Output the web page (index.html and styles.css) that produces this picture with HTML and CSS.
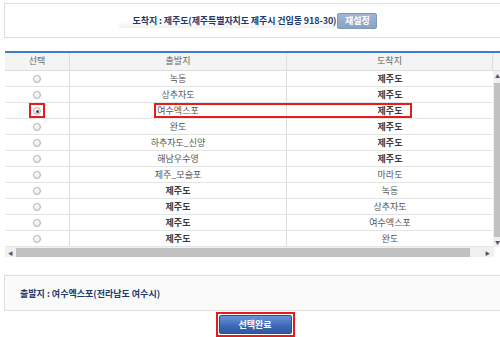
FILE: index.html
```html
<!doctype html>
<html>
  <head>
    <meta charset="utf-8">
    <title>출발지 선택</title>
    <link rel="stylesheet" href="styles.css">
  </head>
  <body>
    <div class="page">
      <div class="dest_box">
        <span class="dest_line">도착지 : 제주도(제주특별자치도 제주시 건입동 918-30)</span>
        <button class="reset_btn">재설정</button>
      </div>

      <div class="grid">
        <div class="grid_head">
          <div class="cell col_pick">선택</div>
          <div class="cell col_from">출발지</div>
          <div class="cell col_to">도착지</div>
        </div>
        <div class="grid_body">
          <div class="rows">
            <div class="row"><div class="cell col_pick"><span class="radio"></span></div><div class="cell col_from">녹동</div><div class="cell col_to bold">제주도</div></div>
            <div class="row"><div class="cell col_pick"><span class="radio"></span></div><div class="cell col_from">상추자도</div><div class="cell col_to bold">제주도</div></div>
            <div class="row picked">
              <div class="cell col_pick"><span class="mark"><span class="radio on"></span></span></div>
              <div class="cell col_from">여수엑스포</div>
              <div class="cell col_to bold">제주도</div>
              <div class="mark_wide"></div>
            </div>
            <div class="row"><div class="cell col_pick"><span class="radio"></span></div><div class="cell col_from">완도</div><div class="cell col_to bold">제주도</div></div>
            <div class="row"><div class="cell col_pick"><span class="radio"></span></div><div class="cell col_from">하추자도_신양</div><div class="cell col_to bold">제주도</div></div>
            <div class="row"><div class="cell col_pick"><span class="radio"></span></div><div class="cell col_from">해남우수영</div><div class="cell col_to bold">제주도</div></div>
            <div class="row"><div class="cell col_pick"><span class="radio"></span></div><div class="cell col_from">제주_모슬포</div><div class="cell col_to">마라도</div></div>
            <div class="row"><div class="cell col_pick"><span class="radio"></span></div><div class="cell col_from bold">제주도</div><div class="cell col_to">녹동</div></div>
            <div class="row"><div class="cell col_pick"><span class="radio"></span></div><div class="cell col_from bold">제주도</div><div class="cell col_to">상추자도</div></div>
            <div class="row"><div class="cell col_pick"><span class="radio"></span></div><div class="cell col_from bold">제주도</div><div class="cell col_to">여수엑스포</div></div>
            <div class="row"><div class="cell col_pick"><span class="radio"></span></div><div class="cell col_from bold">제주도</div><div class="cell col_to">완도</div></div>
          </div>
          <div class="vscroll">
            <span class="arrow">&#9650;</span>
            <span class="vthumb"></span>
            <span class="arrow">&#9660;</span>
          </div>
        </div>
        <div class="hscroll">
          <span class="arrow">&#9664;</span>
          <span class="hthumb"></span>
          <span class="arrow">&#9654;</span>
          <span class="corner"></span>
        </div>
      </div>

      <div class="from_box">출발지 : 여수엑스포(전라남도 여수시)</div>

      <div class="done_wrap">
        <span class="done_mark"><button class="done_btn">선택완료</button></span>
      </div>
    </div>
  </body>
</html>
```

FILE: styles.css
```css
html, body {
  margin: 0;
  padding: 0;
  overflow: hidden;
  background: #fff;
}

.page {
  width: 520px;
  padding: 3px 0 0 4px;
  font-family: "Noto Sans CJK KR", "DejaVu Sans", sans-serif;
  font-size: 9px;
  color: #555;
}

button {
  font-family: inherit;
  cursor: pointer;
}

/* top box with the arrival point */
.dest_box {
  height: 33px;
  border: 1px solid #ddd;
  display: flex;
  align-items: center;
  justify-content: center;
  padding-right: 32px;
}

.dest_line {
  font-weight: bold;
  color: #23396a;
  letter-spacing: -0.1px;
  padding: 1px 1px 1px 14px;
  background: linear-gradient(#fff 55%, #f1f1f1);
}

.reset_btn {
  width: 40px;
  height: 16px;
  padding: 0;
  border: 1px solid #7e98bb;
  border-radius: 2px;
  background: linear-gradient(#a1b6d2, #8aa2c3);
  color: #fff;
  font-size: 9px;
  font-weight: bold;
}

/* the list */
.grid {
  margin: 13px 0 0 1px;
  width: 515px;
  border-top: 2px solid #3d7cc9;
}

.grid_head {
  display: flex;
  height: 17px;
  background: #f4f4f4;
  border-bottom: 1px solid #ddd;
  color: #666;
}

.grid_head .cell {
  line-height: 16px;
}

.cell {
  text-align: center;
  box-sizing: border-box;
}

.col_pick {
  width: 65px;
  border-right: 1px solid #ddd;
}

.col_from {
  width: 217px;
  border-right: 1px solid #ddd;
}

.col_to {
  width: 206px;
}

.grid_head .col_to {
  border-right: 1px solid #ddd;
}

.bold {
  font-weight: bold;
  color: #3a3a3a;
}

.grid_body {
  display: flex;
}

.rows {
  width: 488px;
}

.row {
  display: flex;
  height: 16px;
  box-sizing: border-box;
  border-bottom: 1px solid #e4e4e4;
  position: relative;
}

.row .cell {
  line-height: 15px;
  display: flex;
  align-items: center;
  justify-content: center;
}

.radio {
  width: 8px;
  height: 8px;
  border: 1px solid #b4b4b4;
  border-radius: 50%;
  background: radial-gradient(circle at 40% 35%, #fff, #dcdcdc);
  display: inline-block;
  box-sizing: border-box;
  position: relative;
}

.radio.on::after {
  content: "";
  position: absolute;
  left: 2px;
  top: 2px;
  width: 3px;
  height: 3px;
  border-radius: 50%;
  background: #444;
}

/* red annotation marks */
.mark {
  display: inline-flex;
  align-items: center;
  justify-content: center;
  width: 12px;
  height: 11px;
  border: 2px solid #e31c1c;
}

.mark_wide {
  position: absolute;
  left: 149px;
  top: 0;
  width: 258px;
  height: 15px;
  box-sizing: border-box;
  border: 2px solid #e31c1c;
}

.vscroll {
  width: 20px;
  height: 176px;
  background: #f0f0f0;
  display: flex;
  flex-direction: column;
  align-items: flex-start;
  padding-left: 2px;
  box-sizing: border-box;
}

.vscroll .arrow {
  font-size: 5px;
  color: #555;
  height: 10px;
  line-height: 10px;
}

.vthumb {
  flex: 1;
  width: 15px;
  margin: 2px 0 0 -1px;
  background: #c1c1c1;
}

.hscroll {
  display: flex;
  align-items: center;
  height: 10px;
  background: #f0f0f0;
}

.hscroll .arrow {
  font-size: 5px;
  color: #555;
  width: 11px;
  text-align: center;
}

.hthumb {
  width: 454px;
  height: 9px;
  background: #c1c1c1;
  margin-right: 12px;
}

.corner {
  width: 20px;
  height: 10px;
  margin-left: 1px;
  background: #fff;
}

/* departure summary */
.from_box {
  margin-top: 18px;
  height: 34px;
  border: 1px solid #ddd;
  background: #fafafa;
  display: flex;
  align-items: center;
  padding-left: 15px;
  font-weight: bold;
  color: #23396a;
}

.done_wrap {
  display: flex;
  justify-content: center;
  padding: 1px 18px 0 0;
}

.done_mark {
  border: 2px solid #e31c1c;
  padding: 1px;
  display: inline-block;
}

.done_btn {
  width: 73px;
  height: 19px;
  padding: 0;
  display: block;
  border: 1px solid #29508f;
  border-radius: 2px;
  background: linear-gradient(#6b93d6, #3d67b5 60%, #2f58a3);
  color: #fff;
  font-size: 9px;
  font-weight: bold;
}
```
